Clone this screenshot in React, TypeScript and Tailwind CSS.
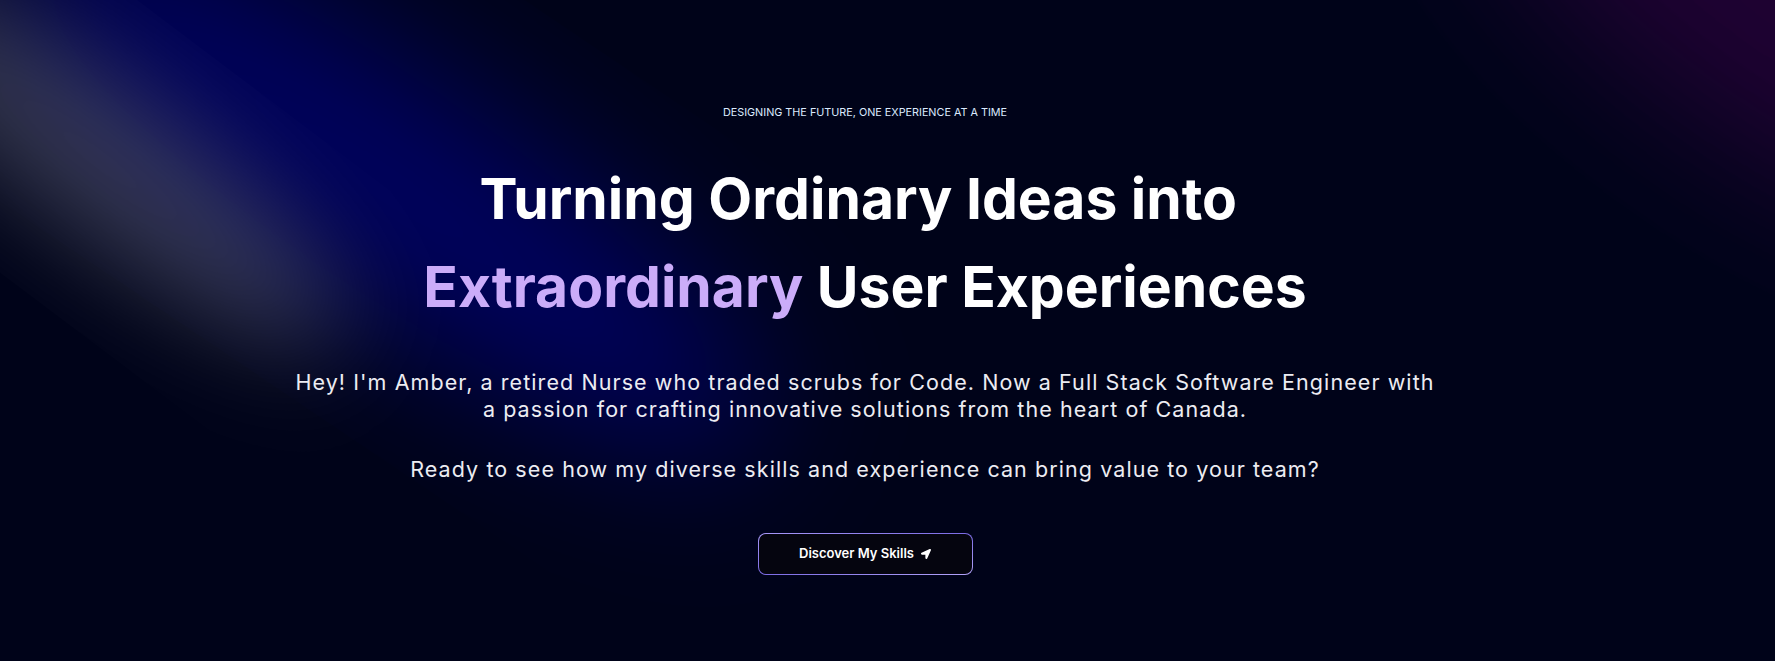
import { FaLocationArrow } from "react-icons/fa"

function Spotlights() {
  return (
    <svg
      className="pointer-events-none absolute inset-0 h-full w-full"
      viewBox="0 0 1775 661"
      preserveAspectRatio="none"
      xmlns="http://www.w3.org/2000/svg"
    >
      <defs>
        <filter id="soft" x="-50%" y="-50%" width="200%" height="200%">
          <feGaussianBlur stdDeviation="50" />
        </filter>
        <filter id="softer" x="-50%" y="-50%" width="200%" height="200%">
          <feGaussianBlur stdDeviation="70" />
        </filter>
      </defs>
      {/* blue beam */}
      <ellipse
        cx="380"
        cy="180"
        rx="460"
        ry="115"
        transform="rotate(34 380 180)"
        fill="#0000ff"
        fillOpacity="0.3"
        filter="url(#softer)"
      />
      {/* white beam */}
      <ellipse
        cx="100"
        cy="160"
        rx="300"
        ry="75"
        transform="rotate(37 100 160)"
        fill="white"
        fillOpacity="0.2"
        filter="url(#soft)"
      />
      {/* purple corner */}
      <ellipse
        cx="1775"
        cy="10"
        rx="360"
        ry="130"
        transform="rotate(35 1775 10)"
        fill="#800080"
        fillOpacity="0.24"
        filter="url(#softer)"
      />
    </svg>
  )
}

export default function App() {
  return (
    <main className="relative h-[661px] w-full overflow-hidden bg-[#000319] font-['Inter',sans-serif]">
      <Spotlights />

      <div className="relative flex flex-col items-center pr-[45px] pt-[105px]">
        <p className="text-[10.8px] leading-4 uppercase text-blue-100">
          Designing the future, one experience at a time
        </p>

        <h1 className="mt-[34px] text-center text-[57px] font-bold leading-[88px] text-white">
          Turning Ordinary Ideas into{"\u00a0"}
          <br />
          <span className="text-[#cbacf9]">Extraordinary</span> User Experiences
        </h1>

        <div className="mt-[38px] max-w-[1150px] text-center text-[21.5px] leading-[27px] tracking-wider text-[#ececf2]">
          <p>
            Hey! I'm Amber, a retired Nurse who traded scrubs for Code. Now a Full Stack Software
            Engineer with a passion for crafting innovative solutions from the heart of Canada.
          </p>
          <p className="mt-[33px]">
            Ready to see how my diverse skills and experience can bring value to your team?
          </p>
        </div>

        <button className="relative mt-[50px] inline-flex h-[42px] w-[215px] overflow-hidden rounded-lg bg-gradient-to-br from-[#a898f8] via-[#7c6be4] to-[#b4a4f8] p-px">
          <span className="inline-flex h-full w-full items-center justify-center gap-[7px] rounded-[7px] bg-[#05050f] text-[13px] font-semibold text-white">
            Discover My Skills
            <FaLocationArrow className="h-[10px] w-[10px]" />
          </span>
        </button>
      </div>
    </main>
  )
}
